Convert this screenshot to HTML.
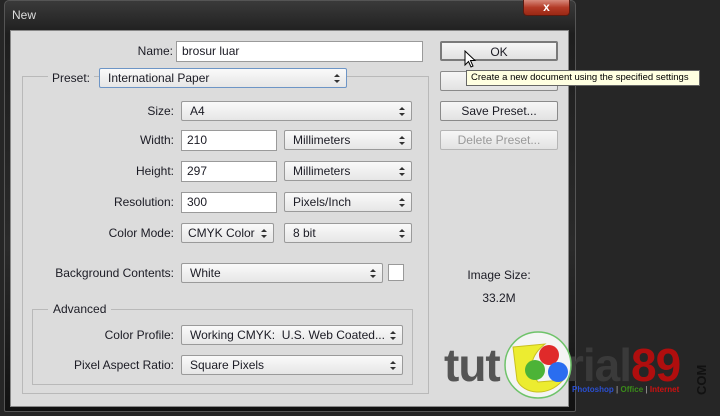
<!DOCTYPE html><html><head><style>
*{margin:0;padding:0;box-sizing:border-box}
body{width:720px;height:416px;background:#262626;position:relative;overflow:hidden;font-family:"Liberation Sans",sans-serif;font-size:12px;color:#1b1b24}
.a{position:absolute}
.frame{left:4px;top:0;width:572px;height:412px;background:linear-gradient(180deg,#3a3a3a,#1e1e1e 8%,#2a2a2a 60%,#111);border:1px solid #555;border-radius:5px 5px 2px 2px}
.panel{left:10px;top:30px;width:559px;height:377px;background:#dcdcdc;border:1px solid #888}
.lbl{text-align:right;line-height:20px;height:20px}
.in{background:#fff;border:1px solid #9a9a9a;line-height:19px;padding-left:5px;height:21px}
.sel{background:linear-gradient(#fafafa,#e6e6e6);border:1px solid #9a9a9a;border-radius:2px;line-height:18px;padding-left:8px;height:20px;white-space:nowrap}
.sel:after{content:"";position:absolute;right:6px;top:5px;width:0;height:0;border-left:3px solid transparent;border-right:3px solid transparent;border-bottom:3px solid #333;}
.sel:before{content:"";position:absolute;right:6px;top:11px;width:0;height:0;border-left:3px solid transparent;border-right:3px solid transparent;border-top:3px solid #333;}
.btn{background:linear-gradient(#f6f6f6,#e2e2e2);border:1px solid #8a8a8a;border-radius:2px;text-align:center;line-height:18px;height:20px;width:118px;left:440px}
.box{border:1px solid #b9b9b9}
</style></head><body>
<div class="a frame"></div>
<div class="a" style="left:12px;top:8px;color:#ddd;font-size:12px">New</div>
<div class="a" style="left:523px;top:0;width:47px;height:16px;background:linear-gradient(#d88a7c,#b33a26 50%,#9a2814);border:1px solid #5a1a10;border-top:none;border-radius:0 0 4px 4px;color:#fff;text-align:center;font-weight:bold;line-height:14px">x</div>
<div class="a panel"></div>
<div class="a box" style="left:22px;top:76px;width:407px;height:318px"></div>
<div class="a box" style="left:32px;top:309px;width:381px;height:76px"></div>
<div class="a" style="left:48px;top:301px;background:#dcdcdc;padding:0 5px;line-height:16px">Advanced</div>

<div class="a lbl" style="left:60px;top:41px;width:113px">Name:</div>
<div class="a in" style="left:176px;top:41px;width:247px">brosur luar</div>
<div class="a" style="left:48px;top:68px;padding:0 4px;background:#dcdcdc;line-height:20px;height:20px">Preset:</div>
<div class="a sel" style="left:99px;top:68px;width:248px;border-color:#6d95c6">International Paper</div>

<div class="a lbl" style="left:60px;top:101px;width:114px">Size:</div>
<div class="a sel" style="left:181px;top:101px;width:231px">A4</div>
<div class="a lbl" style="left:60px;top:130px;width:114px">Width:</div>
<div class="a in" style="left:181px;top:130px;width:96px">210</div>
<div class="a sel" style="left:284px;top:130px;width:128px">Millimeters</div>
<div class="a lbl" style="left:60px;top:161px;width:114px">Height:</div>
<div class="a in" style="left:181px;top:161px;width:96px">297</div>
<div class="a sel" style="left:284px;top:161px;width:128px">Millimeters</div>
<div class="a lbl" style="left:60px;top:192px;width:114px">Resolution:</div>
<div class="a in" style="left:181px;top:192px;width:96px">300</div>
<div class="a sel" style="left:284px;top:192px;width:128px">Pixels/Inch</div>
<div class="a lbl" style="left:60px;top:223px;width:114px">Color Mode:</div>
<div class="a sel" style="left:181px;top:223px;width:93px;padding-left:6px">CMYK Color</div>
<div class="a sel" style="left:284px;top:223px;width:128px">8 bit</div>
<div class="a lbl" style="left:40px;top:263px;width:134px">Background Contents:</div>
<div class="a sel" style="left:181px;top:263px;width:202px">White</div>
<div class="a" style="left:388px;top:264px;width:16px;height:17px;background:#fff;border:1px solid #999"></div>
<div class="a lbl" style="left:40px;top:325px;width:134px">Color Profile:</div>
<div class="a sel" style="left:181px;top:325px;width:222px">Working CMYK:&nbsp; U.S. Web Coated...</div>
<div class="a lbl" style="left:40px;top:355px;width:134px">Pixel Aspect Ratio:</div>
<div class="a sel" style="left:181px;top:355px;width:222px">Square Pixels</div>

<div class="a btn" style="top:41px;border:2px solid #7a7a7a">OK</div>
<div class="a btn" style="top:71px"></div>
<div class="a btn" style="top:101px">Save Preset...</div>
<div class="a btn" style="top:130px;color:#999;border-color:#b5b5b5">Delete Preset...</div>
<div class="a" style="left:466px;top:70px;width:234px;height:16px;background:#ffffe1;border:1px solid #666;font-size:9.5px;line-height:14px;padding-left:4px;color:#000;white-space:nowrap;overflow:hidden">Create a new document using the specified settings</div>
<svg class="a" style="left:464px;top:50px" width="14" height="20"><path d="M1 1 L1 15 L4.5 11.5 L7 17 L9 16 L6.5 10.5 L11 10.5 Z" fill="#fff" stroke="#000" stroke-width="1"/></svg>
<div class="a" style="left:440px;top:268px;width:118px;text-align:center">Image Size:</div>
<div class="a" style="left:440px;top:291px;width:118px;text-align:center">33.2M</div>

<div class="a" style="left:444px;top:342px;font-size:46px;font-weight:bold;color:#555;letter-spacing:-1px;line-height:46px">tut</div>
<div class="a" style="left:566px;top:342px;font-size:46px;font-weight:bold;color:#3a3a3a;letter-spacing:-1px;line-height:46px">rial<span style="color:#b00e0e">89</span></div>
<div class="a" style="left:695px;top:395px;font-size:13px;font-weight:bold;color:#111;transform:rotate(-90deg);transform-origin:left top;line-height:14px">COM</div>
<div class="a" style="left:572px;top:385px;font-size:8px;font-weight:bold;white-space:nowrap"><span style="color:#2a4fd0">Photoshop</span> <span style="color:#888">|</span> <span style="color:#3a8a1a">Office</span> <span style="color:#888">|</span> <span style="color:#d01010">Internet</span></div>
<svg class="a" style="left:503px;top:330px" width="70" height="70"><circle cx="35" cy="35" r="33" fill="#f4f4f4" stroke="#6fc36a" stroke-width="1.5"/><path d="M10 17 L42 14 C28 25 24 40 35 52 L60 50 C45 68 20 64 14 50 Z" fill="#ecec30" stroke="#c9c020"/><circle cx="46" cy="25" r="10" fill="#e02a2a"/><circle cx="32" cy="40" r="10" fill="#4cb337"/><circle cx="55" cy="42" r="10" fill="#2a6df0"/></svg>
</body></html>
